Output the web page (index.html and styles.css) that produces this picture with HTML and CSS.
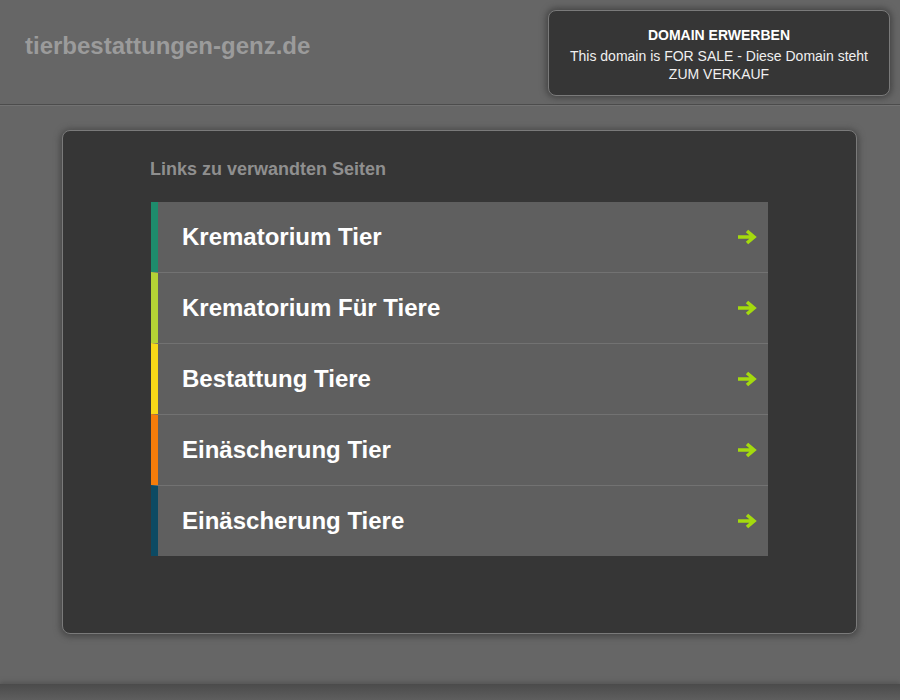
FILE: index.html
```html
<!DOCTYPE html>
<html lang="de">
<head>
<meta charset="utf-8">
<title>tierbestattungen-genz.de</title>
<link rel="stylesheet" href="styles.css">
</head>
<body>
<header class="header">
  <div class="logo">tierbestattungen-genz.de</div>
  <div class="sale">
    <div class="sale-title">DOMAIN ERWERBEN</div>
    <div class="sale-text">This domain is FOR SALE - Diese Domain steht ZUM VERKAUF</div>
  </div>
</header>
<main class="main">
  <div class="box">
    <div class="box-title">Links zu verwandten Seiten</div>
    <ul class="links">
      <li class="link c1"><span class="label">Krematorium Tier</span><svg class="arrow" width="20" height="16" viewBox="0 0 20 16"><path d="M1 8H16M10 2L17 8L10 14" fill="none" stroke="#a4da0e" stroke-width="3.6"/></svg></li>
      <li class="link c2"><span class="label">Krematorium Für Tiere</span><svg class="arrow" width="20" height="16" viewBox="0 0 20 16"><path d="M1 8H16M10 2L17 8L10 14" fill="none" stroke="#a4da0e" stroke-width="3.6"/></svg></li>
      <li class="link c3"><span class="label">Bestattung Tiere</span><svg class="arrow" width="20" height="16" viewBox="0 0 20 16"><path d="M1 8H16M10 2L17 8L10 14" fill="none" stroke="#a4da0e" stroke-width="3.6"/></svg></li>
      <li class="link c4"><span class="label">Einäscherung Tier</span><svg class="arrow" width="20" height="16" viewBox="0 0 20 16"><path d="M1 8H16M10 2L17 8L10 14" fill="none" stroke="#a4da0e" stroke-width="3.6"/></svg></li>
      <li class="link c5"><span class="label">Einäscherung Tiere</span><svg class="arrow" width="20" height="16" viewBox="0 0 20 16"><path d="M1 8H16M10 2L17 8L10 14" fill="none" stroke="#a4da0e" stroke-width="3.6"/></svg></li>
    </ul>
  </div>
</main>
<footer class="footer"></footer>
</body>
</html>
```
FILE: styles.css
```css
html, body {
  margin: 0;
  padding: 0;
}
body {
  background: #666666;
  font-family: "Liberation Sans", Arial, sans-serif;
  width: 900px;
  height: 700px;
  overflow: hidden;
}
.header {
  height: 105px;
  box-sizing: border-box;
  border-bottom: 1px solid #4c4c4c;
  box-shadow: 0 1px 0 #727272;
  display: flex;
  justify-content: space-between;
  align-items: flex-start;
}
.logo {
  margin: 32px 0 0 25px;
  font-size: 24px;
  line-height: 28px;
  font-weight: bold;
  color: #9b9b9b;
}
.sale {
  margin: 10px 10px 0 0;
  width: 342px;
  height: 86px;
  box-sizing: border-box;
  background: #363636;
  border: 1px solid #7a7a7a;
  border-radius: 8px;
  box-shadow: 0 0 6px 2px #444;
  text-align: center;
  color: #f0f0f0;
  font-size: 14px;
  line-height: 18px;
  padding: 15px 16px 0;
}
.sale-title {
  font-weight: bold;
  color: #ffffff;
  margin-bottom: 3px;
}
.main {
  padding: 25px 0 0 62px;
  height: 579px;
  box-sizing: border-box;
}
.box {
  width: 795px;
  height: 504px;
  box-sizing: border-box;
  background: #363636;
  border: 1px solid #7a7a7a;
  border-radius: 8px;
  box-shadow: 0 1px 6px 2px #484848;
  padding: 28px 0 0 87px;
}
.box-title {
  font-size: 18px;
  font-weight: bold;
  color: #8f8f8f;
  line-height: 21px;
  margin-bottom: 22px;
}
.links {
  list-style: none;
  margin: 0 0 0 1px;
  padding: 0;
  width: 617px;
}
.link {
  height: 70px;
  box-sizing: border-box;
  background: #5f5f5f;
  border-left: 7px solid;
  border-top: 1px solid #727272;
  display: flex;
  align-items: center;
  justify-content: space-between;
  padding: 0 11px 0 24px;
}
.link:first-child {
  border-top: none;
}
.link + .link {
  height: 71px;
}
.label {
  font-size: 24px;
  font-weight: bold;
  color: #ffffff;
}
.arrow {
  display: block;
}
.c1 { border-left-color: #1e8c6c; }
.c2 { border-left-color: #b4d335; }
.c3 { border-left-color: #f7d918; }
.c4 { border-left-color: #f57c0a; }
.c5 { border-left-color: #0c4a63; }
.footer {
  height: 16px;
  background: linear-gradient(#4b4b4b, #5e5e5e);
  box-shadow: 0 -2px 4px #555;
}
```
